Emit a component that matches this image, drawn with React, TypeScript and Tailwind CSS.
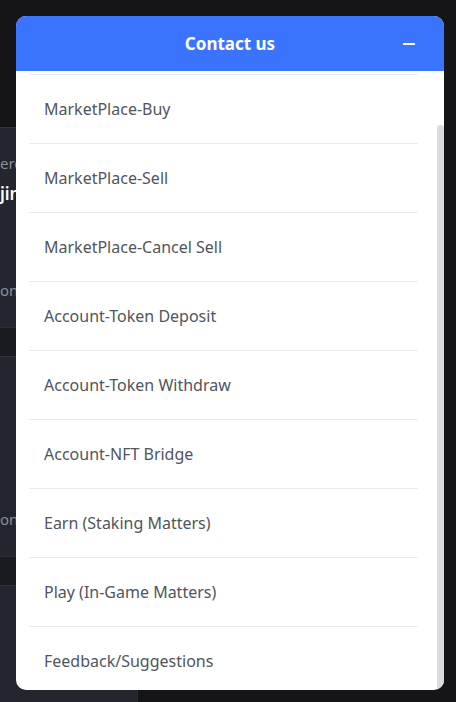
import { Minus } from 'lucide-react';

const topics = [
  'MarketPlace-Buy',
  'MarketPlace-Sell',
  'MarketPlace-Cancel Sell',
  'Account-Token Deposit',
  'Account-Token Withdraw',
  'Account-NFT Bridge',
  'Earn (Staking Matters)',
  'Play (In-Game Matters)',
  'Feedback/Suggestions',
];

function BackgroundCard({ first, last, foot }: { first: string; last: string; foot: string }) {
  return (
    <div className="h-[200px] bg-[#23252f] border-t border-[#30333d] flex flex-col text-[15px]">
      <p className="mt-[24px] text-[#8a8f99] whitespace-nowrap">{first}</p>
      <p className="mt-[6px] text-white font-semibold text-[17px] whitespace-nowrap">{last}</p>
      <p className="mt-auto mb-[26px] text-[#8a8f99] whitespace-nowrap">{foot}</p>
    </div>
  );
}

export default function App() {
  return (
    <div
      className="relative h-[702px] w-[456px] overflow-hidden bg-[#151517]"
      style={{ fontFamily: '"Noto Sans", "Open Sans", sans-serif' }}
    >
      {/* page behind the widget */}
      <div className="pt-[127px] w-[138px] h-full flex flex-col">
        <div className="flex-1 flex flex-col border-r border-[#2a2d36]">
          <BackgroundCard first="eroes" last="jinn" foot="onchain" />
          <div className="h-[29px] bg-[#1a1b20] border-t border-[#2c2f38]" />
          <BackgroundCard first="" last="" foot="onchain" />
          <div className="h-[29px] bg-[#1a1b20] border-t border-[#2c2f38]" />
          <div className="flex-1 bg-[#23252f] border-t border-[#30333d]" />
        </div>
      </div>

      {/* contact widget */}
      <div className="absolute left-[16px] top-[16px] w-[428px] h-[674px] rounded-[10px] bg-white overflow-hidden flex flex-col">
        <div className="h-[55px] shrink-0 bg-[#3a74fd] flex items-center justify-center relative">
          <h2 className="text-white font-bold text-[17px]">Contact us</h2>
          <Minus className="absolute right-[26px] top-[19px] text-white" size={18} strokeWidth={2.5} />
        </div>
        <div className="relative flex-1 min-h-0 overflow-hidden">
          <ul className="pt-[3px] pl-[13px] pr-[26px]">
            {topics.map((t) => (
              <li
                key={t}
                className="h-[69px] border-t border-[#e9ecef] flex items-center pl-[15px] text-[16px] text-[#50555b]"
              >
                {t}
              </li>
            ))}
          </ul>
          <div className="absolute right-0 top-[54px] bottom-0 w-[7px] bg-[#dadcdf] rounded-t-[3px]" />
        </div>
      </div>
    </div>
  );
}
